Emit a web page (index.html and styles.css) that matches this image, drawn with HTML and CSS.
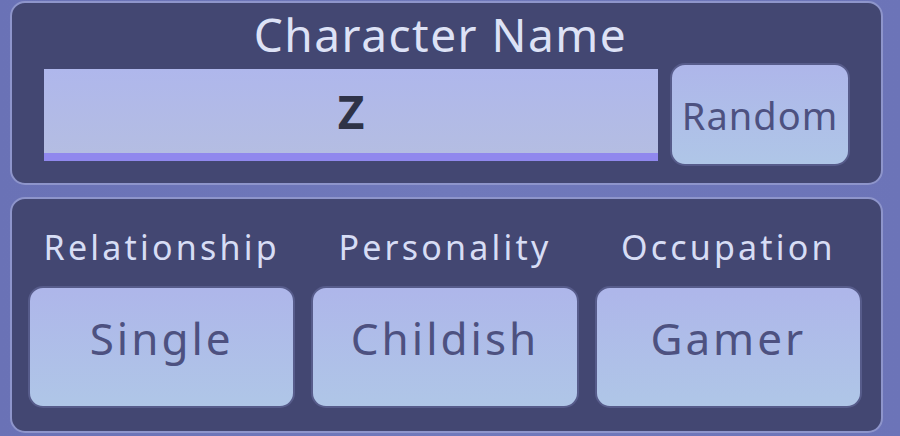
FILE: index.html
```html
<!DOCTYPE html>
<html lang="en">
<head>
    <meta charset="UTF-8">
    <meta name="viewport" content="width=device-width, initial-scale=1.0">
    <title>Character Creator</title>
    <link rel="stylesheet" href="styles.css">
</head>
<body>
    <div class="screen">
        <div class="panel name-panel">
            <h1 class="panel-title">Character Name</h1>
            <div class="name-row">
                <input class="name-input" type="text" value="Z">
                <button class="btn random-btn">Random</button>
            </div>
        </div>

        <div class="panel traits-panel">
            <div class="trait">
                <div class="trait-label">Relationship</div>
                <button class="btn trait-btn">Single</button>
            </div>
            <div class="trait">
                <div class="trait-label">Personality</div>
                <button class="btn trait-btn">Childish</button>
            </div>
            <div class="trait">
                <div class="trait-label">Occupation</div>
                <button class="btn trait-btn">Gamer</button>
            </div>
        </div>
    </div>
</body>
</html>
```

FILE: styles.css
```css
body {
    margin: 0;
    padding: 0;
    font-family: 'Noto Sans', sans-serif;
    background: linear-gradient(90deg, #6a72b6 0%, #7079bb 50%, #6c74b8 100%);
    height: 436px;
    overflow: hidden;
}

.screen {
    display: flex;
    flex-direction: column;
    gap: 12px;
    padding: 1px 17px 0 10px;
}

.panel {
    box-sizing: border-box;
    background-color: #434772;
    border: 2px solid #8e95cb;
    border-radius: 15px;
}

.name-panel {
    height: 184px;
    padding: 7px 31px 0 32px;
}

.panel-title {
    margin: 0;
    padding-right: 13px;
    font-size: 46px;
    line-height: 48px;
    font-weight: 400;
    color: #dde2f6;
    text-align: center;
    letter-spacing: 1.5px;
}

.name-row {
    display: flex;
    align-items: center;
    gap: 12px;
    margin-top: 5px;
}

.name-input {
    width: 614px;
    height: 84px;
    box-sizing: content-box;
    padding: 0;
    border: none;
    border-bottom: 8px solid #9088ee;
    background: linear-gradient(180deg, #afb7ec 0%, #b4bde2 100%);
    font-family: 'Noto Sans', sans-serif;
    font-size: 46px;
    font-weight: 700;
    color: #2f3347;
    text-align: center;
    outline: none;
}

.btn {
    font-family: 'Noto Sans', sans-serif;
    color: #4d5180;
    background: linear-gradient(180deg, #aeb6ea 0%, #afc6e7 100%);
    border: 2px solid #575c8b;
    border-radius: 15px;
    cursor: pointer;
    padding: 0;
}

.random-btn {
    width: 180px;
    height: 103px;
    font-size: 38px;
    letter-spacing: 1px;
}

.traits-panel {
    height: 236px;
    display: flex;
    gap: 16px;
    padding: 28px 19px 0 16px;
}

.trait {
    flex: 1;
    display: flex;
    flex-direction: column;
    align-items: stretch;
}

.trait-label {
    font-size: 34px;
    line-height: 40px;
    color: #d7ddf5;
    text-align: center;
    letter-spacing: 3.2px;
    margin-bottom: 19px;
}

.trait-btn {
    height: 122px;
    font-size: 44px;
    letter-spacing: 3px;
    padding-bottom: 18px;
}
```
